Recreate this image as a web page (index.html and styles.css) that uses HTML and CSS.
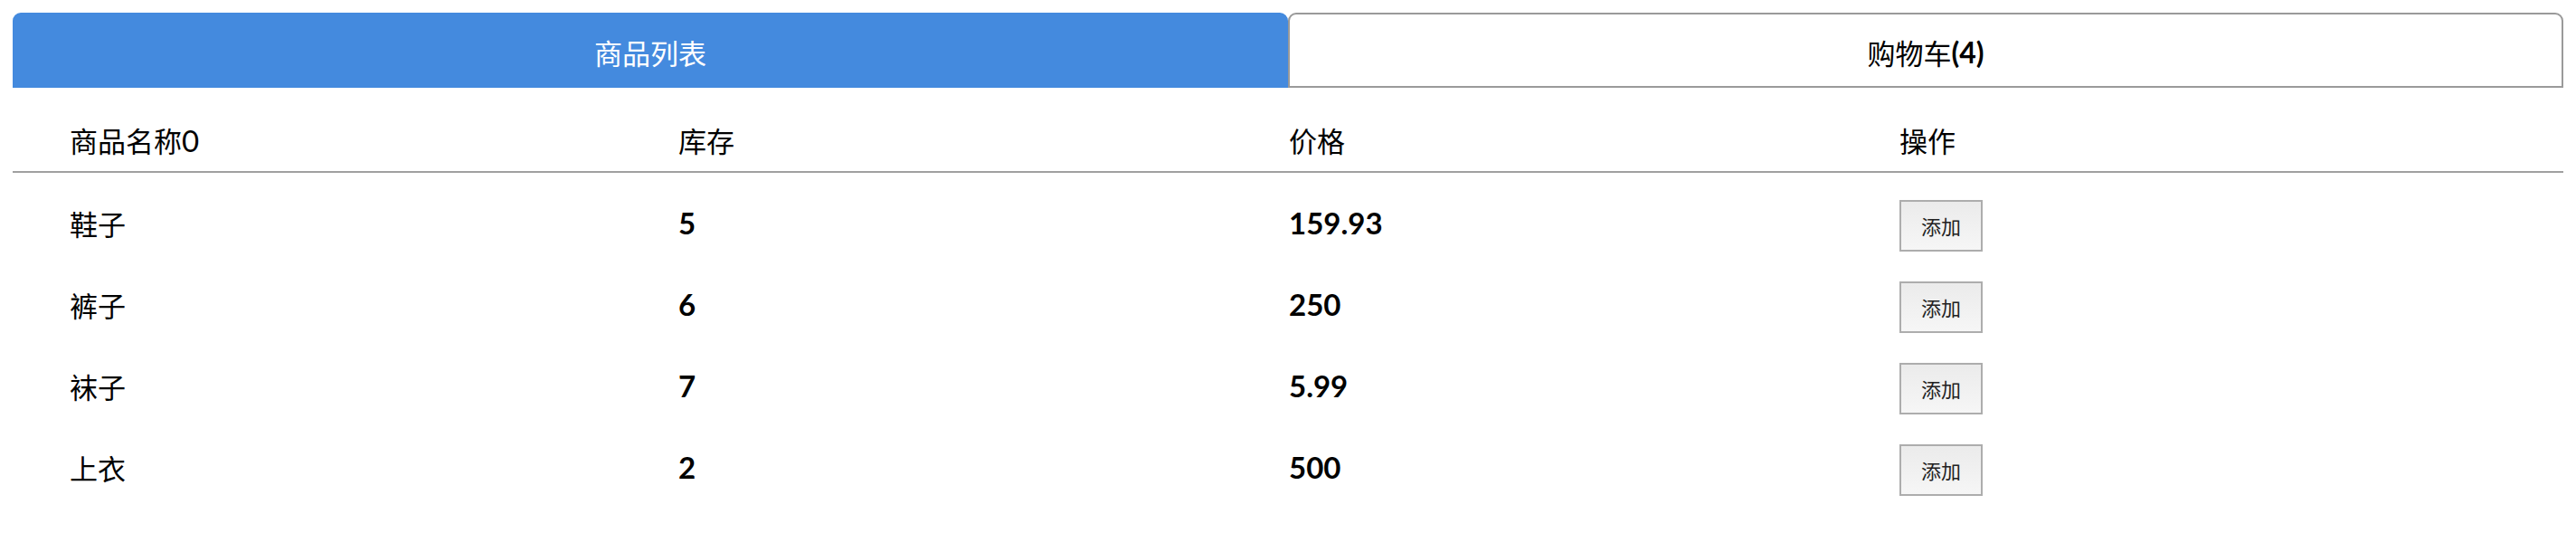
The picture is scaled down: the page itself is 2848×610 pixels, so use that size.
FILE: index.html
```html
<!DOCTYPE html>
<html lang="zh-CN">
<head>
<meta charset="utf-8">
<title>商品列表</title>
<link rel="stylesheet" href="styles.css">
</head>
<body>
<div class="app">
  <div class="tabs">
    <div class="tab tab-active">商品列表</div>
    <div class="tab">购物车<span class="count">(4)</span></div>
  </div>
  <div class="table">
    <div class="row row-head">
      <div class="cell">商品名称<span class="latin">0</span></div>
      <div class="cell">库存</div>
      <div class="cell">价格</div>
      <div class="cell">操作</div>
    </div>
    <div class="body">
      <div class="row">
        <div class="cell">鞋子</div>
        <div class="cell num">5</div>
        <div class="cell num">159.93</div>
        <div class="cell"><button class="btn">添加</button></div>
      </div>
      <div class="row">
        <div class="cell">裤子</div>
        <div class="cell num">6</div>
        <div class="cell num">250</div>
        <div class="cell"><button class="btn">添加</button></div>
      </div>
      <div class="row">
        <div class="cell">袜子</div>
        <div class="cell num">7</div>
        <div class="cell num">5.99</div>
        <div class="cell"><button class="btn">添加</button></div>
      </div>
      <div class="row">
        <div class="cell">上衣</div>
        <div class="cell num">2</div>
        <div class="cell num">500</div>
        <div class="cell"><button class="btn">添加</button></div>
      </div>
    </div>
  </div>
</div>
</body>
</html>
```

FILE: styles.css
```css
html, body {
  margin: 0;
  padding: 0;
  background: #ffffff;
}

body {
  font-family: "Lato", "Noto Sans CJK SC", sans-serif;
  color: #000000;
  font-size: 31px;
}

.app {
  padding: 14px 14px 0 14px;
}

.tabs {
  display: flex;
  height: 83px;
}

.tab {
  flex: 1 1 0;
  display: flex;
  align-items: center;
  justify-content: center;
  padding-top: 3px;
  box-sizing: border-box;
  border: 2px solid #9a9a9a;
  border-radius: 9px 9px 0 0;
  background: #ffffff;
  color: #000000;
  font-size: 31px;
}

.tab-active {
  background: #448ade;
  border-color: #448ade;
  color: #ffffff;
}

.count {
  font-weight: 700;
  font-size: 32px;
}

.latin {
  font-size: 33px;
}

.row {
  display: grid;
  grid-template-columns: 673px 675px 675px 1fr;
  padding-left: 63px;
  align-items: center;
}

.row-head {
  padding-top: 35px;
  padding-bottom: 10px;
  line-height: 46px;
  border-bottom: 2px solid #a0a0a0;
}

.body {
  padding-top: 12px;
}

.body .row {
  height: 90px;
  box-sizing: border-box;
  padding-bottom: 4px;
}

.num {
  font-weight: 700;
  font-size: 33px;
}

.btn {
  display: block;
  width: 92px;
  height: 57px;
  box-sizing: border-box;
  border: 2px solid #adadad;
  border-radius: 0;
  background: linear-gradient(#ebebeb, #f6f6f6);
  font-family: "Noto Sans CJK SC", sans-serif;
  font-size: 22px;
  color: #222222;
  padding: 0;
  margin-top: 6px;
}
```
